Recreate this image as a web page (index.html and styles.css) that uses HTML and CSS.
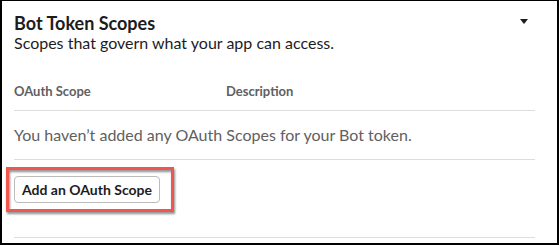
FILE: index.html
```html
<!DOCTYPE html>
<html lang="en">
<head>
  <meta charset="UTF-8">
  <title>Bot Token Scopes</title>
  <link rel="stylesheet" href="styles.css">
</head>
<body>

  <div class="frame">
    <div class="section">

      <div class="section-head">
        <h2>Bot Token Scopes</h2>
        <svg class="caret" width="8" height="5" viewBox="0 0 8 5"><path d="M0 0H8L4 5Z" fill="#1d1c1d"/></svg>
      </div>
      <p class="section-sub">Scopes that govern what your app can access.</p>

      <div class="scope-table">
        <div class="scope-cols">
          <span class="col-name">OAuth Scope</span>
          <span class="col-desc">Description</span>
        </div>
        <div class="scope-empty">You haven’t added any OAuth Scopes for your Bot token.</div>
      </div>

      <div class="scope-actions">
        <span class="btn-wrap">
          <button class="btn">Add an OAuth Scope</button>
          <span class="highlight"></span>
        </span>
      </div>

    </div>
  </div>

</body>
</html>
```

FILE: styles.css
```css
body {
  margin: 0;
  background: #fff;
  font-family: Lato, "Open Sans", sans-serif;
  color: #1d1c1d;
}
.frame {
  height: 245px;
  box-sizing: border-box;
  border-top: 1px solid #000;
  border-left: 2px solid #000;
  border-right: 2px solid #000;
  border-bottom: 2px solid #000;
  overflow: hidden;
}
.section {
  padding: 12px 22px 0 12px;
}
.section-head {
  display: flex;
  justify-content: space-between;
  align-items: flex-start;
}
.section-head h2 {
  margin: 0;
  font-size: 18px;
  line-height: 20px;
  font-weight: 700;
}
.caret { margin: 6px 7px 0 0; }
.section-sub {
  margin: 0;
  font-size: 16px;
  line-height: 20px;
}
.scope-table { margin-top: 29px; }
.scope-cols {
  display: flex;
  font-size: 13px;
  line-height: 18px;
  font-weight: 700;
  color: #616061;
  padding-bottom: 10px;
  border-bottom: 1px solid #ddd;
}
.col-name { width: 212px; }
.scope-empty {
  font-size: 16px;
  line-height: 20px;
  color: #616061;
  padding: 14px 0 14px;
  border-bottom: 1px solid #ddd;
}
.scope-actions {
  padding: 16px 0 34px;
  border-bottom: 1px solid #ddd;
}
.btn-wrap {
  position: relative;
  display: inline-block;
  vertical-align: top;
}
.btn {
  display: block;
  height: 27px;
  width: 146px;
  padding: 0;
  background: #fff;
  border: 1px solid #bbb;
  border-radius: 4px;
  font-family: inherit;
  font-size: 14px;
  font-weight: 700;
  color: #1d1c1d;
}
.highlight {
  position: absolute;
  left: -8px; top: -9px;
  width: 168px; height: 45px;
  box-sizing: border-box;
  border: 3px solid #f0554e;
  filter: drop-shadow(1px 2px 1px rgba(0,0,0,0.45));
}
```
